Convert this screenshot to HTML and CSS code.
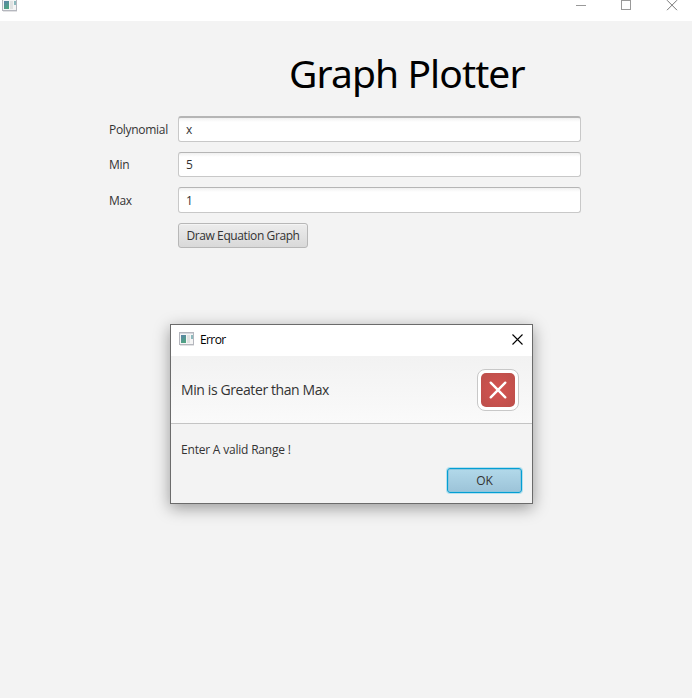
FILE: index.html
```html
<!DOCTYPE html>
<html lang="en">
<head>
<meta charset="utf-8">
<title>Graph Plotter</title>
<link rel="stylesheet" href="styles.css">
</head>
<body>
<svg width="0" height="0" class="defs">
  <defs>
    <linearGradient id="pane" x1="0" y1="0" x2="0.4" y2="1"><stop offset="0" stop-color="#5b82a8"/><stop offset="1" stop-color="#4fa382"/></linearGradient>
    <symbol id="app" viewBox="0 0 16 14">
      <rect x=".5" y=".5" width="14" height="12" fill="#f5f5f5" stroke="#b5b7be"/>
      <path d="M1 13.5h14" stroke="#e2e2e4"/>
      <path d="M1 1.5h13" stroke="#d5d7de"/>
      <rect x="2" y="3" width="5" height="8" fill="url(#pane)"/>
      <rect x="8" y="3" width="3" height="8" fill="#e0e2e2"/>
      <rect x="12" y="3" width="2" height="4" fill="#8db9bd"/>
    </symbol>
  </defs>
</svg>
<div class="window">
  <header class="titlebar">
    <svg class="app-icon" width="16" height="14"><use href="#app"/></svg>
    <svg class="controls" width="104" height="12" fill="none" stroke="#999">
      <path d="M1 5.5h10M46.5.5h9v9h-9z" shape-rendering="crispEdges"/>
      <path d="M92 .2l10 10M102 .2l-10 10" stroke="#777"/>
    </svg>
  </header>
  <main>
    <h1>Graph Plotter</h1>
    <form class="form">
      <label for="poly">Polynomial</label><input id="poly" class="first" value="x">
      <label for="min">Min</label><input id="min" value="5">
      <label for="max">Max</label><input id="max" value="1">
      <button type="button" class="draw">Draw Equation Graph</button>
    </form>
  </main>
  <section class="dialog" role="dialog">
    <div class="dialog-title">
      <svg class="dialog-icon" width="16" height="14"><use href="#app"/></svg>
      <span class="name">Error</span>
      <svg class="close" width="11" height="11" stroke="#000" stroke-width="1.1"><path d="M.5.5l10 10M10.5.5l-10 10"/></svg>
    </div>
    <div class="dialog-header">
      <span class="message">Min is Greater than Max</span>
      <div class="error-icon"><svg width="34" height="34" fill="none" stroke="#fff" stroke-width="2.4" stroke-linecap="round"><path d="M9.7 9.7l14.6 14.6M24.3 9.7L9.7 24.3"/></svg></div>
    </div>
    <div class="dialog-body">
      <p>Enter A valid Range !</p>
      <button type="button" class="ok">OK</button>
    </div>
  </section>
</div>
</body>
</html>
```
FILE: styles.css
```css
* { box-sizing: border-box; }
body { margin: 0; background: #fff; overflow: hidden; font: 12px/16px "Open Sans", "Noto Sans", sans-serif; color: #333; }
.defs { position: absolute; }
svg { display: block; flex: none; }
.window { position: relative; width: 692px; height: 698px; background: #f3f3f3; }
.titlebar { display: flex; justify-content: space-between; height: 21px; padding: 0 14px 0 2px; background: #fff; }
.app-icon { margin-top: -2px; }
.titlebar .controls { width: 104px; margin-right: -1px; }
h1 { margin: 0 0 0 289px; padding-top: 27px; height: 95px; font: 400 39px/50px "Noto Sans", sans-serif; color: #000; letter-spacing: -.9px; white-space: nowrap; }
.form { display: grid; grid-template-columns: 69px 403px; grid-template-rows: 26px 25px 26px 25px; row-gap: 10px; margin-left: 109px; }
label { align-self: center; padding-top: 1px; letter-spacing: -.3px; }
input { height: 100%; width: 403px; padding: 0 7px; border: 1px solid #c8c8c8; border-top-color: #b5b5b5; border-radius: 3px; background: linear-gradient(#f0f0f0, #fff 4px); font: inherit; color: #333; outline: none; }
input.first { border-top-width: 2px; }
button { font: inherit; color: #333; padding: 0; white-space: nowrap; }
.draw { grid-column: 2; width: 130px; height: 25px; padding-top: 1px; border: 1px solid #b7b7b7; border-radius: 3px; background: linear-gradient(#ececec, #d9d9d9); box-shadow: inset 0 1px 0 #f4f4f4; letter-spacing: -.4px; }
.dialog { position: absolute; left: 170px; top: 324px; width: 363px; height: 180px; border: 1px solid #6b6b6b; background: #f3f3f3; box-shadow: 0 4px 15px rgba(0,0,0,.38); }
.dialog-title { display: flex; align-items: center; height: 31px; padding: 0 9px 0 8px; background: #fff; color: #000; }
.dialog-icon { margin-top: -3px; }
.name { margin: -1px 0 0 5px; letter-spacing: -.6px; }
.close { margin-left: auto; margin-top: -3px; }
.dialog-header { display: flex; align-items: center; justify-content: space-between; height: 68px; padding: 0 13px 0 10px; background: linear-gradient(#f2f2f2, #fafafa); border-bottom: 1px solid #c4c4c4; }
.message { font-size: 14px; letter-spacing: -.4px; }
.error-icon { width: 42px; height: 42px; padding: 3px; border: 1px solid #c8c8c8; border-radius: 8px; background: #fff; }
.error-icon svg { border-radius: 5px; background: radial-gradient(#d55351, #bb4f4a); }
.dialog-body { padding: 18px 10px 0; display: flex; flex-direction: column; }
.dialog-body p { margin: 0; letter-spacing: -.2px; }
.ok { align-self: flex-end; width: 75px; height: 25px; margin-top: 10px; padding-top: 1px; border: 1px solid #039ed3; border-radius: 3px; background: linear-gradient(#b2d9ea, #9cc3d8); box-shadow: 0 0 0 1px #b5e0ee, inset 0 0 0 1px #8cc6de; }
```
